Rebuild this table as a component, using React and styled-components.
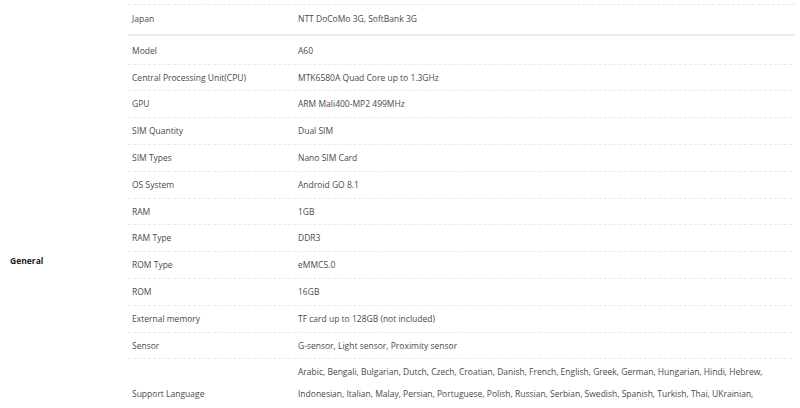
import React from "react";
import styled, { createGlobalStyle } from "styled-components";

const GlobalStyle = createGlobalStyle`
  html, body {
    margin: 0;
    padding: 0;
    background: #fff;
    overflow: hidden;
  }
  body {
    font-family: "Open Sans", "Liberation Sans", Arial, sans-serif;
    font-size: 8.5px;
    color: #4a4a4a;
  }
`;

const Table = styled.div`
  padding: 4px 5px 0 8px;
`;

// $cut: the tail of the group above, whose name cell is scrolled out of view
const Group = styled.section`
  display: grid;
  grid-template-columns: ${(p) => (p.$cut ? "1fr" : "120px 1fr")};
  padding: ${(p) => (p.$cut ? "1px 0 2px" : "2px 0")};
  margin-left: ${(p) => (p.$cut ? "120px" : "0")};
  border-top: ${(p) => (p.$cut ? "1px dashed #e8e8e8" : "none")};
  border-bottom: 2px solid #ececec;
`;

const GroupName = styled.div`
  display: flex;
  align-items: center;
  padding-left: 2px;
  font-weight: 700;
  color: #222;
`;

const Rows = styled.div`
  display: flex;
  flex-direction: column;
  margin-right: 3px;
`;

const Row = styled.div`
  display: grid;
  grid-template-columns: 166px 1fr;
  border-bottom: 1px dashed #e8e8e8;
  &:last-child {
    border-bottom: none;
  }
`;

const Cell = styled.div`
  display: flex;
  align-items: center;
  padding: 2px 4px;
  line-height: 21.8px;
`;

const Lines = styled.div`
  display: flex;
  flex-direction: column;
  padding: 2px 4px;
  line-height: 21.8px;
  white-space: nowrap;
`;

const general = [
  ["Model", "A60"],
  ["Central Processing Unit(CPU)", "MTK6580A Quad Core up to 1.3GHz"],
  ["GPU", "ARM Mali400-MP2 499MHz"],
  ["SIM Quantity", "Dual SIM"],
  ["SIM Types", "Nano SIM Card"],
  ["OS System", "Android GO 8.1"],
  ["RAM", "1GB"],
  ["RAM Type", "DDR3"],
  ["ROM Type", "eMMC5.0"],
  ["ROM", "16GB"],
  ["External memory", "TF card up to 128GB (not included)"],
  ["Sensor", "G-sensor, Light sensor, Proximity sensor"],
];

const languages = [
  "Arabic, Bengali, Bulgarian, Dutch, Czech, Croatian, Danish, French, English, Greek, German, Hungarian, Hindi, Hebrew,",
  "Indonesian, Italian, Malay, Persian, Portuguese, Polish, Russian, Serbian, Swedish, Spanish, Turkish, Thai, UKrainian,",
  "Vietnamese, Simplified Chinese, Traditional Chinese",
];

const tail = [
  ["Bluetooth Version", "4.0"],
  ["GPS", "Yes"],
];

export default function App() {
  return (
    <>
      <GlobalStyle />
      <Table>
        <Group $cut>
          <Rows>
            <Row>
              <Cell>Japan</Cell>
              <Cell>NTT DoCoMo 3G, SoftBank 3G</Cell>
            </Row>
          </Rows>
        </Group>
        <Group>
          <GroupName>General</GroupName>
          <Rows>
            {general.map(([k, v]) => (
              <Row key={k}>
                <Cell>{k}</Cell>
                <Cell>{v}</Cell>
              </Row>
            ))}
            <Row>
              <Cell>Support Language</Cell>
              <Lines>
                {languages.map((l) => (
                  <span key={l}>{l}</span>
                ))}
              </Lines>
            </Row>
            {tail.map(([k, v]) => (
              <Row key={k}>
                <Cell>{k}</Cell>
                <Cell>{v}</Cell>
              </Row>
            ))}
          </Rows>
        </Group>
      </Table>
    </>
  );
}
